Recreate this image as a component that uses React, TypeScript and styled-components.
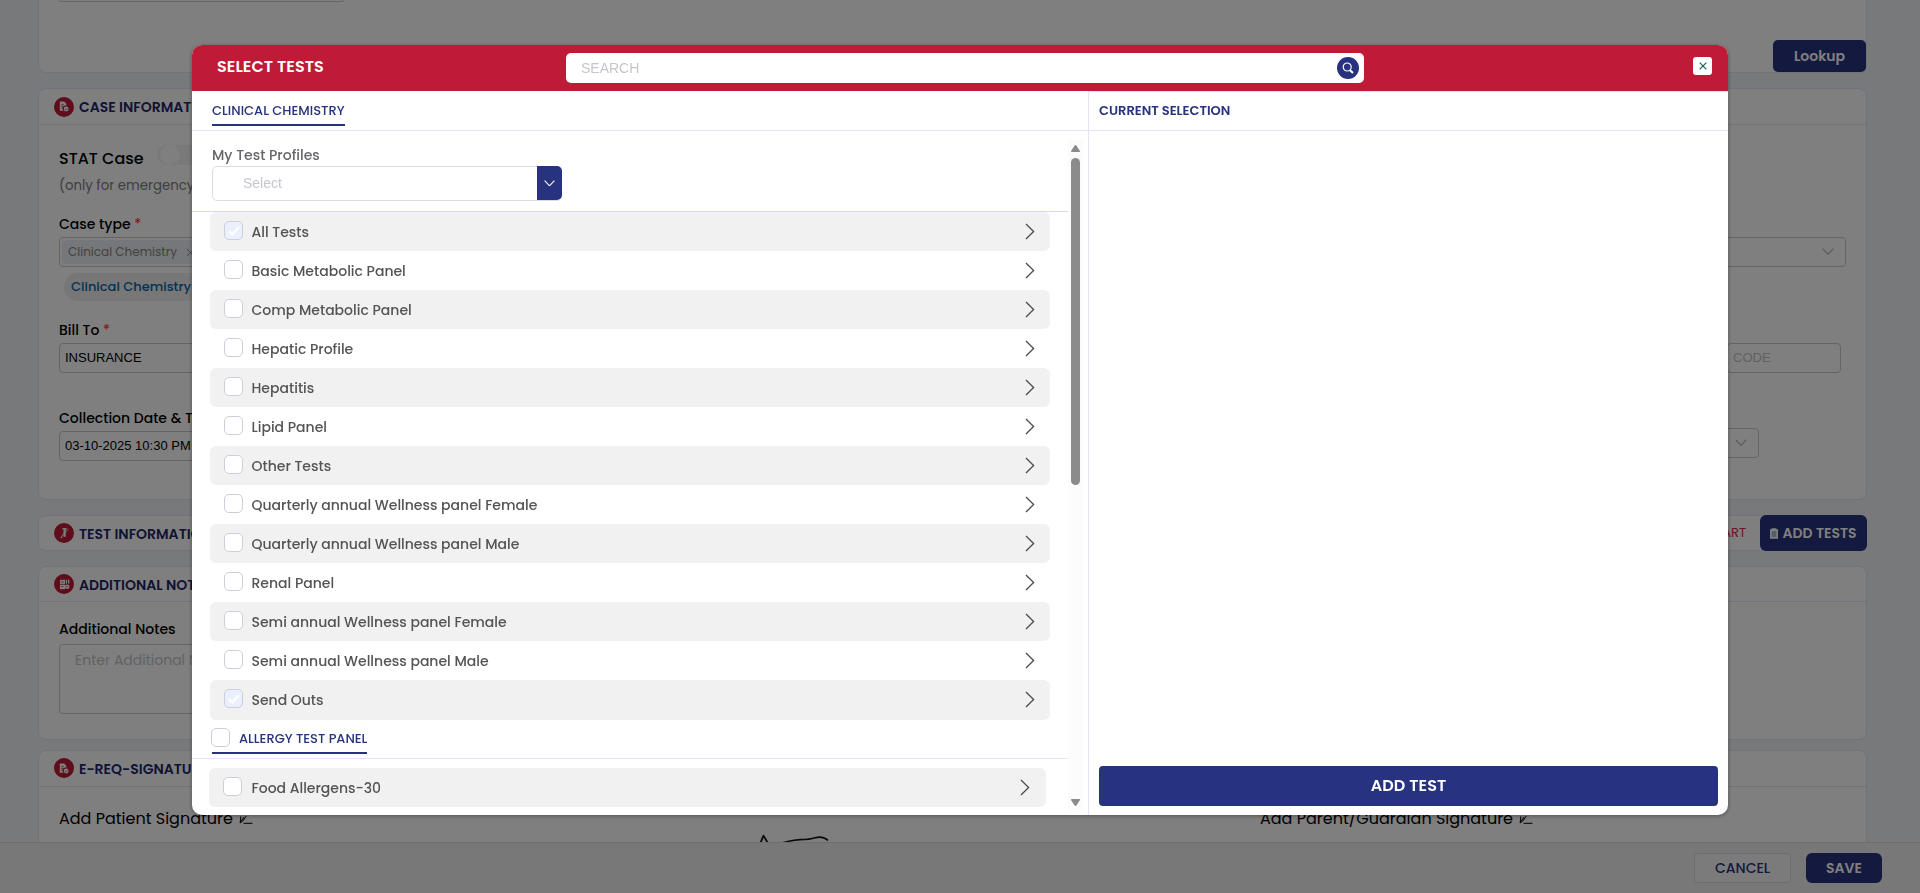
import React from "react";
import styled, { createGlobalStyle, css } from "styled-components";

const navy = "#27337f";
const titleNavy = "#1e2768";
const crimson = "#bf1a36";
const line = "#e5e4f6";
const sans = `Poppins, Inter, sans-serif`;
const arial = `"Liberation Sans", Arial, sans-serif`;

const GlobalStyle = createGlobalStyle`
  *, *::before, *::after { box-sizing: border-box; }
  html, body, #root { margin: 0; height: 100%; }
  body { overflow: hidden; background: #f0f2f7; font-family: ${sans}; font-size: 14px; line-height: 20px; color: #000; }
  button, input { font: inherit; margin: 0; }
  svg { display: block; flex: none; }
`;

/* ---------- requisition page behind the dialog ---------- */

const Page = styled.div`
  display: flex;
  flex-direction: column;
  height: 893px;
`;

const Content = styled.main`
  flex: 1;
  min-height: 0;
  overflow: hidden;
  padding: 0 53px 0 38px;
`;

const Card = styled.section<{ $height: number; $gap?: number }>`
  height: ${(p) => p.$height}px;
  margin-bottom: ${(p) => p.$gap ?? 15}px;
  background: #fff;
  border: 1px solid ${line};
  border-radius: 8px;
`;

const TopCard = styled(Card)`
  border-top: 0;
  border-radius: 0 0 8px 8px;
  display: flex;
  justify-content: space-between;
  padding-left: 20px;
`;

const CutInput = styled.div`
  width: 285px;
  height: 2px;
  border: 1px solid #ccc;
  border-top: 0;
  border-radius: 0 0 4px 4px;
`;

const CardHeader = styled.header<{ $lined?: boolean; $height?: number; $below?: number }>`
  display: flex;
  align-items: center;
  height: ${(p) => p.$height ?? 36}px;
  padding: 0 0 ${(p) => p.$below ?? 0}px 15px;
  ${(p) => p.$lined && css`border-bottom: 1px solid ${line};`}
`;

const Badge = styled.span`
  display: grid;
  place-items: center;
  width: 20px;
  height: 20px;
  border-radius: 50%;
  background: ${crimson};
`;

const CardTitle = styled.h2<{ $drop?: number }>`
  margin: ${(p) => p.$drop ?? 2}px 0 0 5px;
  font-size: 14px;
  font-weight: 600;
  line-height: 20px;
  color: ${titleNavy};
  white-space: nowrap;
`;

const NavyButton = styled.button`
  display: flex;
  align-items: center;
  justify-content: center;
  border: 0;
  background: ${navy};
  color: #fff;
  font-weight: 600;
  white-space: nowrap;
`;

const LookupButton = styled(NavyButton)`
  width: 93px;
  height: 32px;
  margin: 40px 0 0;
  border-radius: 5px;
`;

const AddTestsButton = styled(NavyButton)`
  width: 107px;
  height: 36px;
  margin-right: -1px;
  padding: 0;
  border-radius: 6px;
  gap: 4px;
`;

const CartLink = styled.span`
  margin-left: auto;
  margin-right: 14px;
  font-size: 13px;
  color: #e02a45;
`;

const CardBody = styled.div<{ $top?: number }>`
  padding: ${(p) => p.$top ?? 20}px 20px 0 20px;
`;

const StatRow = styled.div`
  display: flex;
  height: 31px;
`;

const StatLabel = styled.span`
  margin-top: 4px;
  width: 98px;
  font-size: 16px;
  font-weight: 500;
`;

const Toggle = styled.span`
  width: 44px;
  height: 20px;
  border-radius: 10px;
  background: #f3f3f3;
  padding-left: 3px;

  &::before {
    content: "";
    display: block;
    width: 20px;
    height: 20px;
    border-radius: 50%;
    background: #fefefe;
  }
`;

const Hint = styled.p`
  margin: 0 0 18px;
  font-size: 13.3px;
  color: #7d7d7d;
`;

const Label = styled.div<{ $below?: number }>`
  font-weight: 500;
  margin-bottom: ${(p) => p.$below ?? 3}px;

  i {
    font-style: normal;
    color: #ff3b49;
  }
`;

const FieldRow = styled.div<{ $below: number }>`
  display: flex;
  justify-content: space-between;
  height: 30px;
  margin-bottom: ${(p) => p.$below}px;
`;

const Field = styled.div<{ $width: number; $end?: number; $lift?: number }>`
  display: flex;
  align-items: center;
  width: ${(p) => p.$width}px;
  height: 30px;
  margin-right: ${(p) => p.$end ?? 0}px;
  margin-top: ${(p) => -(p.$lift ?? 0)}px;
  padding: 0 5px;
  border: 1px solid #c9c9c9;
  border-radius: 4px;
  font-family: ${arial};
  font-size: 13px;

  > svg { margin-left: auto; margin-right: 6px; }
`;

const FaintText = styled.span`
  color: #c0c2c8;
`;

const Chip = styled.span`
  display: flex;
  align-items: center;
  gap: 9px;
  height: 24px;
  margin-left: -3px;
  padding: 0 8px 0 6px;
  border-radius: 4px;
  background: #eceff4;
  font: 400 12px/24px ${sans};
  color: #858585;
`;

const Pill = styled.div`
  width: 142px;
  height: 28px;
  margin: 0 0 19px 5px;
  padding: 4px 0 0 7px;
  border-radius: 14px;
  background: #efefef;
  font-size: 13px;
  font-weight: 500;
  color: #0b66a8;
`;

const TextArea = styled.div`
  width: 1200px;
  height: 70px;
  padding: 5px 15px;
  border: 1px solid #ccc;
  border-radius: 4px;
  color: #c3c5cb;
`;

const Signatures = styled.div`
  display: flex;
  align-items: flex-start;
  padding: 22px 0 0 20px;
  font-size: 16px;
`;

const SignatureLabel = styled.span<{ $width: number }>`
  display: flex;
  align-items: center;
  gap: 6px;
  width: ${(p) => p.$width}px;
  white-space: nowrap;
`;

const Scribble = styled.span`
  width: 501px;
  padding-top: 24px;
`;

const Footer = styled.footer`
  display: flex;
  justify-content: flex-end;
  gap: 15px;
  height: 51px;
  padding: 10px 38px 0 0;
  border-top: 1px solid #dcdde3;
  background: #f1f1f1;
`;

const CancelButton = styled.button`
  width: 97px;
  height: 30px;
  border: 1px solid #dcdcdc;
  border-radius: 4px;
  background: #f6f6f6;
  color: ${navy};
  font-weight: 500;
`;

const SaveButton = styled(NavyButton)`
  width: 76px;
  height: 30px;
  border-radius: 6px;
`;

/* ---------- dialog ---------- */

const Backdrop = styled.div`
  position: fixed;
  inset: 0;
  display: flex;
  justify-content: center;
  align-items: flex-start;
  padding-top: 45px;
  background: rgba(0, 0, 0, 0.5);
`;

const Dialog = styled.div`
  display: flex;
  flex-direction: column;
  width: 1536px;
  height: 770px;
  border-radius: 10px;
  overflow: hidden;
  background: #fff;
  box-shadow: 0 1px 4px rgba(0, 0, 0, 0.35);
`;

const DialogHeader = styled.header`
  display: flex;
  align-items: flex-start;
  height: 46px;
  padding: 8px 16px 0 25px;
  background: ${crimson};
`;

const DialogTitle = styled.h1`
  width: 349px;
  margin: 4px 0 0;
  font-size: 16px;
  font-weight: 600;
  line-height: 20px;
  letter-spacing: 0.08px;
  color: #fff;
`;

const SearchBox = styled.label`
  display: flex;
  align-items: center;
  width: 798px;
  height: 30px;
  padding: 0 5px 0 15px;
  border-radius: 5px;
  background: #fff;
`;

const SearchInput = styled.input`
  flex: 1;
  padding: 0;
  border: 0;
  outline: 0;
  background: none;
  font: 14px/20px ${arial};

  &::placeholder { color: #c4c6cd; opacity: 1; }
`;

const SearchButton = styled.span`
  display: grid;
  place-items: center;
  width: 22px;
  height: 22px;
  border-radius: 50%;
  background: ${navy};
`;

const CloseButton = styled.button`
  display: grid;
  place-items: center;
  width: 19px;
  height: 18px;
  margin: 4px 0 0 auto;
  padding: 0;
  border: 0;
  border-radius: 3px;
  background: #fff;
`;

const DialogBody = styled.div`
  display: flex;
  flex: 1;
  min-height: 0;
`;

const CatalogPane = styled.div`
  display: flex;
  flex-direction: column;
  width: 896px;
`;

const TabBar = styled.div`
  height: 40px;
  padding-left: 20px;
  border-bottom: 1px solid ${line};
`;

const Tab = styled.span`
  display: block;
  width: 133px;
  height: 35px;
  padding-top: 10px;
  border-bottom: 2px solid ${navy};
  font-size: 13px;
  font-weight: 500;
  color: ${navy};
  white-space: nowrap;
`;

const ScrollArea = styled.div`
  display: flex;
  height: 670px;
  margin-top: 9px;
`;

const ScrollContent = styled.div`
  width: 876px;
`;

const Scrollbar = styled.div`
  display: flex;
  flex-direction: column;
  align-items: center;
  justify-content: space-between;
  width: 15px;
  padding: 5px 0 4px;
  background: #fcfcfc;
`;

const Thumb = styled.span`
  width: 9px;
  height: 327px;
  margin: 6px 0 auto;
  border-radius: 5px;
  background: #8b8b8b;
`;

const Profiles = styled.div`
  height: 72px;
  padding: 5px 0 0 20px;
  border-bottom: 1px solid #d9d7f7;
`;

const ProfilesLabel = styled.div`
  height: 21px;
  font-weight: 500;
  color: #66676b;
`;

const ProfileSelect = styled.div`
  display: flex;
  justify-content: space-between;
  width: 350px;
  height: 35px;
  border: 1px solid #dcdcdf;
  border-radius: 5px;
`;

const ProfilePlaceholder = styled.span`
  padding: 6px 0 0 30px;
  font: 14px/20px ${arial};
  color: #c4c6cd;
`;

const ProfileToggle = styled.span`
  display: grid;
  place-items: center;
  width: 25px;
  height: 34px;
  margin: -1px -1px 0 0;
  border-radius: 0 5px 5px 0;
  background: ${navy};
`;

const TestRow = styled.div<{ $shaded?: boolean; $height?: number; $inset?: number; $width?: number; $end?: number }>`
  display: flex;
  height: ${(p) => p.$height ?? 39}px;
  width: ${(p) => p.$width ?? 840}px;
  margin-left: ${(p) => p.$inset ?? 18}px;
  padding: 0 ${(p) => p.$end ?? 15}px 0 14px;
  border-radius: 6px;
  background: ${(p) => (p.$shaded ? "#f1f1f1" : "#fff")};

  > svg { margin: 11px 0 0 auto; }
`;

const CheckSquare = styled.span<{ $checked?: boolean; $top?: number }>`
  display: grid;
  place-items: center;
  flex: none;
  width: 19px;
  height: 19px;
  margin-top: ${(p) => p.$top ?? 9}px;
  border: 1px solid #cdced8;
  border-radius: 5px;
  background: ${(p) => (p.$checked ? "#ebf0fe" : "#fff")};
`;

const TestName = styled.span<{ $gap?: number }>`
  margin: 10px 0 0 ${(p) => p.$gap ?? 8.5}px;
  font-weight: 500;
  color: #545454;
  white-space: nowrap;
`;

const PanelHeading = styled.div`
  height: 39px;
  padding-left: 19px;
  margin-bottom: 9px;
  border-bottom: 1px solid ${line};
`;

const PanelTitle = styled.div`
  display: flex;
  width: 156px;
  height: 34px;
  background: linear-gradient(${navy}, ${navy}) 1px 100% / 155px 2px no-repeat;
`;

const PanelName = styled.span`
  margin: 9px 0 0 9px;
  font-size: 13px;
  font-weight: 500;
  color: ${navy};
  white-space: nowrap;
`;

const SelectionPane = styled.div`
  display: flex;
  flex-direction: column;
  flex: 1;
  border-left: 1px solid ${line};
`;

const SelectionHeader = styled.div`
  height: 40px;
  padding: 9px 0 0 10px;
  border: solid ${line};
  border-width: 1px 0;
  font-size: 13px;
  font-weight: 600;
  color: ${navy};
`;

const AddTestButton = styled(NavyButton)`
  width: 619px;
  height: 40px;
  margin: auto 0 9px 10px;
  border-radius: 4px;
  font-size: 16px;
  letter-spacing: 0.08px;
`;

/* ---------- icons ---------- */

const Chevron = () => (
  <svg width="10" height="17" viewBox="0 0 10 17" fill="none" stroke="#4a4a4a" strokeWidth="1.3">
    <path d="M1 1l7.6 7.5L1 16" />
  </svg>
);

const DownChevron = ({ color, size = 11 }: { color: string; size?: number }) => (
  <svg width={size} height={size * 0.6} viewBox="0 0 11 6.6" fill="none" stroke={color} strokeWidth="1.1">
    <path d="M.6.6L5.5 5.8 10.4.6" />
  </svg>
);

const Tick = () => (
  <svg width="12" height="10" viewBox="0 0 12 10" fill="none" stroke="#fff" strokeWidth="2.2">
    <path d="M1 5.4l3.2 3L11 1" />
  </svg>
);

const ReportIcon = () => (
  <svg width="10" height="11" viewBox="0 0 10 11">
    <path d="M.8.5h4.4L7.4 3v1.6A3 3 0 0 0 4.6 9.8H.8z" fill="#fff" />
    <path d="M2.2 3.6h2.6M2.2 5.4h2.2M2.2 7.2h1.6" stroke={crimson} strokeWidth=".7" />
    <circle cx="7.2" cy="8" r="2.4" fill="#fff" />
    <path d="M6.1 8l.9.9 1.5-1.7" fill="none" stroke={crimson} strokeWidth=".7" />
  </svg>
);

const TubeIcon = () => (
  <svg width="11" height="12" viewBox="0 0 11 12" fill="none" stroke="#fff">
    <path d="M3.4 1.7h4.4" strokeWidth="1.2" />
    <path d="M5.6 2v7.8" strokeWidth="2.2" />
    <path d="M1.8 10.4L5.6 5.8 9.4 2.2M2 10.6h1.6" strokeWidth=".9" />
  </svg>
);

const NotesIcon = () => (
  <svg width="11" height="11" viewBox="0 0 11 11">
    <path d="M1 .8h5v9.4H1z" fill="#fff" />
    <path d="M6.8.8h1.3v3.8H6.800zM9 .8h1.300v3.800H9z" fill="#fff" />
    <circle cx="8.2" cy="7.8" r="2.3" fill="#fff" />
    <path d="M2 3h2.800M1 5.400h5M2 7.600h2.400M7.200 7.800h2" stroke={crimson} strokeWidth=".7" />
  </svg>
);

const ClipboardIcon = () => (
  <svg width="8" height="11" viewBox="0 0 8 11">
    <path d="M0 1.200h1.600V.2h4.800v1H8v9.600H0z" fill="#fff" />
    <path d="M1.600 4h4.800M1.600 6h4.800M1.600 8h4.800" stroke={navy} strokeWidth=".7" />
  </svg>
);

const PenIcon = () => (
  <svg width="14" height="12" viewBox="0 0 14 12" fill="none" stroke="#000" strokeWidth="1">
    <path d="M1.8 3.4L1.2 9.8l2.4-1.6 3.6-5.200M1.2 9.8L5 4.200M4.600 10.300h8.800" />
  </svg>
);

const SearchIcon = () => (
  <svg width="12" height="12" viewBox="0 0 12 12" fill="none" stroke="#fff">
    <circle cx="5.2" cy="5" r="4" strokeWidth="1.2" />
    <path d="M7.8 8l3.2 3" strokeWidth="2.1" />
  </svg>
);

const CrossIcon = ({ color, size, weight }: { color: string; size: number; weight: number }) => (
  <svg width={size} height={size} viewBox="0 0 8 8" fill="none" stroke={color} strokeWidth={weight}>
    <path d="M.7.7l6.6 6.6M7.3.7L.7 7.3" />
  </svg>
);

const Arrow = ({ down }: { down?: boolean }) => (
  <svg width="9" height="7" viewBox="0 0 9 7">
    <path
      d={down ? "M.4 0h8.2q.6.5.2 1.2L5.4 6.5q-.9.9-1.8 0L.2 1.2Q-.2.5.4 0z" : "M.4 7h8.2q.6-.5.2-1.2L5.4.5q-.9-.9-1.8 0L.2 5.8Q-.2 6.5.4 7z"}
      fill="#8b8b8b"
    />
  </svg>
);

const SignatureStroke = () => (
  <svg width="72" height="12" viewBox="0 0 72 12" fill="none" stroke="#111" strokeLinejoin="round">
    <path d="M.6 12L4.5 2.6 10 12" strokeWidth="1.8" />
    <path d="M24 9.6C30 8.400 33 7 41 6.600c8 0 11-.3 15-1.800 5-1.400 9-1.200 13 2.600" strokeWidth="1.6" />
  </svg>
);

/* ---------- data ---------- */

const tests: { name: string; checked?: boolean }[] = [
  { name: "All Tests", checked: true },
  { name: "Basic Metabolic Panel" },
  { name: "Comp Metabolic Panel" },
  { name: "Hepatic Profile" },
  { name: "Hepatitis" },
  { name: "Lipid Panel" },
  { name: "Other Tests" },
  { name: "Quarterly annual Wellness panel Female" },
  { name: "Quarterly annual Wellness panel Male" },
  { name: "Renal Panel" },
  { name: "Semi annual Wellness panel Female" },
  { name: "Semi annual Wellness panel Male" },
  { name: "Send Outs", checked: true },
];

const Requisition = () => (
  <Page>
    <Content>
      <TopCard $height={73}>
        <CutInput />
        <LookupButton>Lookup</LookupButton>
      </TopCard>

      <Card $height={412}>
        <CardHeader $lined>
          <Badge><ReportIcon /></Badge>
          <CardTitle $drop={0}>CASE INFORMATION</CardTitle>
        </CardHeader>
        <CardBody>
          <StatRow>
            <StatLabel>STAT Case</StatLabel>
            <Toggle />
          </StatRow>
          <Hint>(only for emergency)</Hint>
          <Label>Case type <i>*</i></Label>
          <FieldRow $below={6}>
            <Field $width={500}>
              <Chip>Clinical Chemistry <CrossIcon color="#858585" size={9} weight={0.8} /></Chip>
            </Field>
            <Field $width={500}><DownChevron color="#b5b5b5" size={12} /></Field>
          </FieldRow>
          <Pill>Clinical Chemistry</Pill>
          <Label>Bill To <i>*</i></Label>
          <FieldRow $below={35}>
            <Field $width={500}>INSURANCE</Field>
            <Field $width={114} $end={5}><FaintText>CODE</FaintText></Field>
          </FieldRow>
          <Label>Collection Date &amp; Time</Label>
          <FieldRow $below={0}>
            <Field $width={500}>03-10-2025 10:30 PM</Field>
            <Field $width={300} $end={87} $lift={3}><DownChevron color="#b5b5b5" size={12} /></Field>
          </FieldRow>
        </CardBody>
      </Card>

      <Card $height={36}>
        <CardHeader $height={34}>
          <Badge><TubeIcon /></Badge>
          <CardTitle>TEST INFORMATION</CardTitle>
          <CartLink>CART</CartLink>
          <AddTestsButton><ClipboardIcon />ADD TESTS</AddTestsButton>
        </CardHeader>
      </Card>

      <Card $height={174} $gap={10}>
        <CardHeader $lined $height={35}>
          <Badge><NotesIcon /></Badge>
          <CardTitle>ADDITIONAL NOTES</CardTitle>
        </CardHeader>
        <CardBody $top={17}>
          <Label $below={5}>Additional Notes</Label>
          <TextArea>Enter Additional Notes</TextArea>
        </CardBody>
      </Card>

      <Card $height={174}>
        <CardHeader $lined $below={1}>
          <Badge><ReportIcon /></Badge>
          <CardTitle $drop={1}>E-REQ-SIGNATURE</CardTitle>
        </CardHeader>
        <Signatures>
          <SignatureLabel $width={700}>Add Patient Signature <PenIcon /></SignatureLabel>
          <Scribble><SignatureStroke /></Scribble>
          <SignatureLabel $width={300}>Add Parent/Guardian Signature <PenIcon /></SignatureLabel>
        </Signatures>
      </Card>
    </Content>

    <Footer>
      <CancelButton>CANCEL</CancelButton>
      <SaveButton>SAVE</SaveButton>
    </Footer>
  </Page>
);

export default function App() {
  return (
    <>
      <GlobalStyle />
      <Requisition />
      <Backdrop>
        <Dialog role="dialog">
          <DialogHeader>
            <DialogTitle>SELECT TESTS</DialogTitle>
            <SearchBox>
              <SearchInput placeholder="SEARCH" />
              <SearchButton><SearchIcon /></SearchButton>
            </SearchBox>
            <CloseButton aria-label="Close">
              <CrossIcon color="#14605a" size={8} weight={1.2} />
            </CloseButton>
          </DialogHeader>

          <DialogBody>
            <CatalogPane>
              <TabBar><Tab>CLINICAL CHEMISTRY</Tab></TabBar>
              <ScrollArea>
                <ScrollContent>
                  <Profiles>
                    <ProfilesLabel>My Test Profiles</ProfilesLabel>
                    <ProfileSelect>
                      <ProfilePlaceholder>Select</ProfilePlaceholder>
                      <ProfileToggle><DownChevron color="#fff" size={11} /></ProfileToggle>
                    </ProfileSelect>
                  </Profiles>

                  {tests.map((t, i) => (
                    <TestRow key={t.name} $shaded={i % 2 === 0} $height={i === tests.length - 1 ? 40 : 39}>
                      <CheckSquare $checked={t.checked}>{t.checked && <Tick />}</CheckSquare>
                      <TestName>{t.name}</TestName>
                      <Chevron />
                    </TestRow>
                  ))}

                  <PanelHeading>
                    <PanelTitle>
                      <CheckSquare $top={8} />
                      <PanelName>ALLERGY TEST PANEL</PanelName>
                    </PanelTitle>
                  </PanelHeading>

                  <TestRow $shaded $inset={17} $width={837} $end={16}>
                    <CheckSquare />
                    <TestName $gap={9.5}>Food Allergens-30</TestName>
                    <Chevron />
                  </TestRow>
                </ScrollContent>
                <Scrollbar>
                  <Arrow />
                  <Thumb />
                  <Arrow down />
                </Scrollbar>
              </ScrollArea>
            </CatalogPane>

            <SelectionPane>
              <SelectionHeader>CURRENT SELECTION</SelectionHeader>
              <AddTestButton>ADD TEST</AddTestButton>
            </SelectionPane>
          </DialogBody>
        </Dialog>
      </Backdrop>
    </>
  );
}
